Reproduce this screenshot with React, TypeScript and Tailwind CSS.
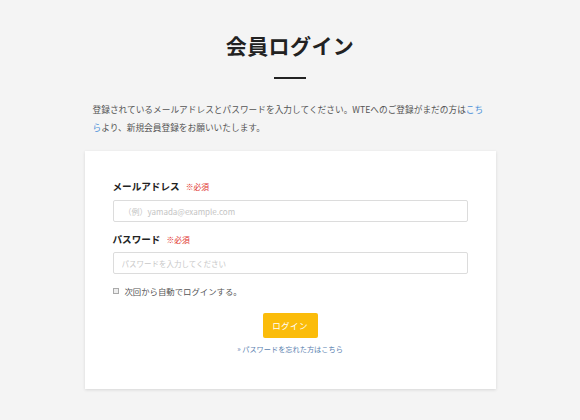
import React, { useState } from 'react';

export default function App() {
  const [remember, setRemember] = useState(false);

  return (
    <div className="min-h-screen w-full bg-[#f4f4f4] [font-family:'Noto_Sans_CJK_JP','Noto_Sans',sans-serif] text-[#333]">
      <div className="w-[411px] mx-auto pt-[30px] pb-[31px]">
        {/* Heading */}
        <h1 className="text-center text-[21px] leading-[30px] font-bold text-[#222] tracking-[0.02em]">
          会員ログイン
        </h1>
        <div className="w-[32px] h-[2px] bg-[#222] mx-auto mt-[17px]" />

        <p className="mt-[22px] px-[8px] text-[8.7px] leading-[18px] text-[#555]">
          登録されているメールアドレスとパスワードを入力してください。WTEへのご登録がまだの方は
          <a href="#" className="text-[#4a90d9]">こち</a>
          <br />
          <a href="#" className="text-[#4a90d9]">ら</a>
          より、新規会員登録をお願いいたします。
        </p>

        {/* Card */}
        <div className="mt-[14px] bg-white shadow-[0_1px_3px_rgba(0,0,0,0.12)] pt-[28px] pb-[34px] px-[28px]">
          <FieldLabel label="メールアドレス" />
          <input
            type="email"
            placeholder="（例）yamada@example.com"
            className="mt-[7px] w-full h-[22px] border border-[#dcdcdc] rounded-[2px] px-[10px] text-[8px] outline-none placeholder:text-[#c4c4c4]"
          />

          <div className="mt-[10px]">
            <FieldLabel label="パスワード" />
          </div>
          <input
            type="password"
            placeholder="パスワードを入力してください"
            className="mt-[6px] w-full h-[22px] border border-[#dcdcdc] rounded-[2px] px-[8px] text-[7.5px] outline-none placeholder:text-[#c8c8c8]"
          />

          <label className="mt-[10px] flex items-center gap-[6px] h-[14px] text-[8.4px] text-[#555] cursor-pointer">
            <span
              onClick={() => setRemember(!remember)}
              className={`w-[6px] h-[6px] border border-[#aaa] ${remember ? 'bg-[#888]' : 'bg-[#eee]'}`}
            />
            次回から自動でログインする。
          </label>

          <div className="mt-[15px] flex justify-center">
            <button className="w-[55px] h-[25px] bg-[#fbbc0a] rounded-[2px] text-white text-[8.5px] tracking-[0.05em]">
              ログイン
            </button>
          </div>
          <div className="mt-[5px] text-center text-[7.2px] leading-[12px] text-[#5b7fb0]">
            <a href="#">» パスワードを忘れた方はこちら</a>
          </div>
        </div>
      </div>
    </div>
  );
}

function FieldLabel({ label }: { label: string }) {
  return (
    <div className="flex items-baseline gap-[6px] h-[14px] leading-[14px]">
      <span className="text-[9.6px] font-bold text-[#222]">{label}</span>
      <span className="text-[7.8px] text-[#e0332d]">※必須</span>
    </div>
  );
}
